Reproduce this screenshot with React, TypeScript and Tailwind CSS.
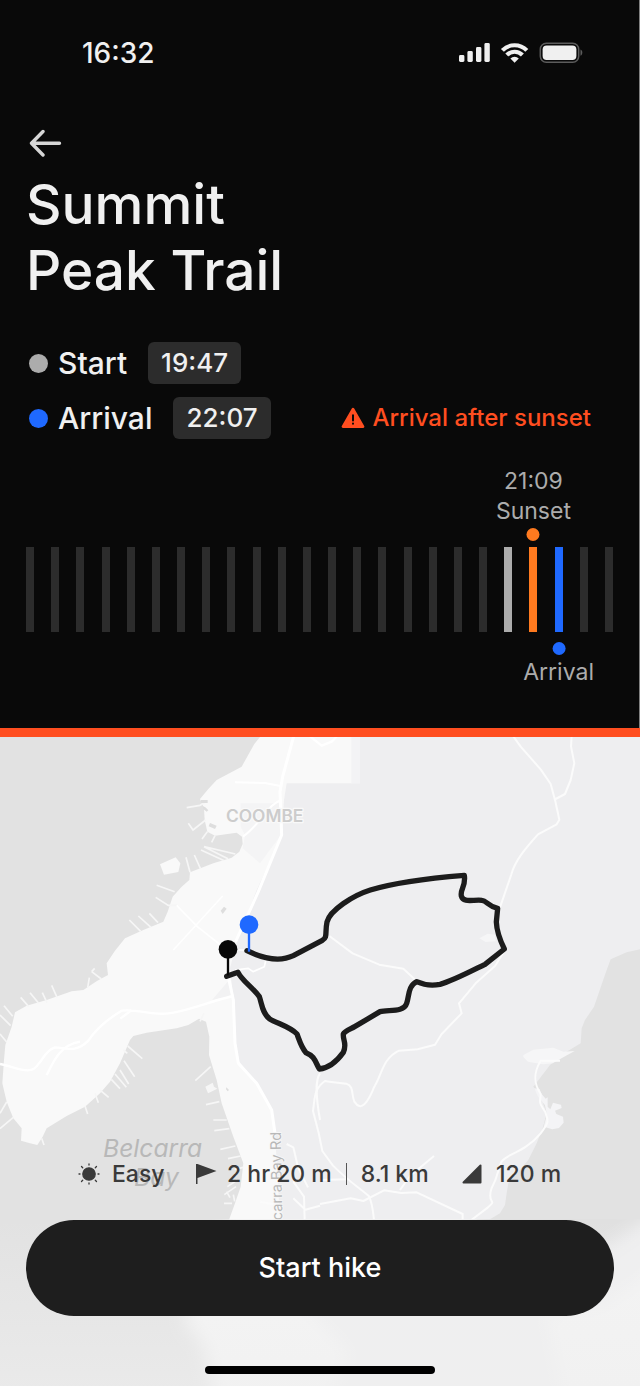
import React from "react";

const HOURS = Array.from({ length: 24 }, (_, hour) => hour);
const START_HOUR = 19;
const SUNSET_HOUR = 20;
const ARRIVAL_HOUR = 21;

function barColor(hour: number) {
  if (hour === START_HOUR) return "bg-[#acacac]";
  if (hour === SUNSET_HOUR) return "bg-[#ff7a1f]";
  if (hour === ARRIVAL_HOUR) return "bg-[#1f69ff]";
  return "bg-[#2c2c2c]";
}

function StatusIcons() {
  return (
    <svg viewBox="0 0 124 22" className="h-[22px] w-[124px]" fill="#f0f0f0" role="img" aria-label="Signal, Wi-Fi and battery">
      <rect x="0" y="13" width="5.4" height="7" rx="1.4" />
      <rect x="8.4" y="9" width="5.4" height="11" rx="1.4" />
      <rect x="17" y="5" width="5.4" height="15" rx="1.4" />
      <rect x="25.4" y="1" width="5.4" height="19" rx="1.4" />
      <g fill="none" stroke="#f0f0f0" strokeWidth="4.2">
        <path d="M43.4 8.4a17 17 0 0 1 24.4 0" />
        <path d="M47.8 13a11 11 0 0 1 15.6 0" />
      </g>
      <path d="M51.4 16.4a6 6 0 0 1 8.4 0l-4.2 4.4z" />
      <rect x="81.3" y="1.2" width="38.4" height="19" rx="6" fill="none" stroke="#5c5c5c" strokeWidth="1.5" />
      <rect x="83.6" y="3.5" width="33.8" height="14.4" rx="4" />
      <path d="M121.5 7.6c2.4.9 2.4 5.3 0 6.2z" fill="#5c5c5c" />
    </svg>
  );
}

function TrailMap() {
  return (
    <svg
      viewBox="0 51 1920 1950"
      preserveAspectRatio="xMidYMin slice"
      className="col-start-1 row-start-1 h-full w-full"
      role="img"
      aria-label="Trail map"
    >
      <defs>
        <filter id="soft" x="-5%" y="-5%" width="110%" height="110%">
          <feGaussianBlur stdDeviation="26" />
        </filter>
        <clipPath id="lower">
          <rect x="0" y="1498" width="1920" height="510" />
        </clipPath>
        <linearGradient id="fade" x1="0" y1="0" x2="0" y2="1">
          <stop offset="0" stopColor="#efefef" stopOpacity="0" />
          <stop offset="1" stopColor="#efefef" stopOpacity="0.6" />
        </linearGradient>
      </defs>

      <rect y="40" width="1920" height="1970" fill="#e2e2e2" />

      {/* Shoreline */}
      <path
        fill="#f9f9f9"
        d="M785 45L763 72L725 140L650 180L625 207L600 237L612 265L614 300L622 335L645 347L710 338L726 350L728 372L718 395L695 413L640 430L570 457L568 480L545 500L518 530L503 575L490 605L430 630L375 655L345 692L320 730L324 765L292 782L250 810L215 814L140 840L80 857L45 877L35 920L16 975L12 1020L7 1090L20 1145L40 1195L65 1225L63 1262L90 1270L112 1275L128 1250L140 1225L200 1188L255 1160L300 1120L330 1085L360 1030L390 960L400 948L440 938L530 925L565 915L597 896L618 905L628 950L627 1005L650 1080L665 1150L700 1250L730 1330L722 1400L705 1450L685 1505L1430 1505V45Z"
      />
      <path fill="#f9f9f9" d="M480 433L527 412L541 430L535 456L492 464Z" />
      <path fill="#f4f4f5" d="M722 250L845 250L843 345L780 430L728 385L735 345L722 320Z" />
      <path fill="#f2f2f3" d="M683 785L697 828L636 840Z" />

      {/* Park */}
      <path
        fill="#eeeef0"
        d="M860 190H1080V45H1920V688L1880 697L1832 718L1820 750L1782 860L1755 900L1745 925L1742 970L1700 995L1650 1035L1600 1100L1620 1125L1640 1180L1628 1225L1610 1270L1585 1320L1525 1390L1520 1420L1515 1455L1500 1480L1470 1498H840L825 1240L815 1170L770 1090L714 1020L705 980V850L697 810L690 745L712 660L770 510L845 350L852 240Z"
      />
      <path fill="#f3f3f5" d="M1054 51h26v139h-26z" />
      <path fill="#f6f6f7" d="M1438 655l25-14 22 3 2 20-30 2z M1570 1005l30-16 60-6 30 12 34-2-26 14-40 23-30 3-44-8-14-14z" />
      <path fill="#f4f4f6" d="M1603 1105l16 2 4 13 14 16 6-4v28l8 8 8-20 14 4 10 2 2 10-20 8 4 10 20 8 2 18-14 16-20 4-26-8 10-36-6-28-22-28z" />

      {/* Piers and inlets */}
      <g fill="none" stroke="#f6f6f6" strokeWidth="5">
        <path d="M560 263l40-7 20-12M565 310l14 20 38-30M622 335l-16 22M645 347l-10 20M558 412l12 45M583 405l18 40M603 390l70 32M612 380l72 36M612 380l94 22M470 496l54 19M467 532l38 24h26M448 580l26 28M415 588l38 34M388 600l34 34M275 755l9-10M275 755l29 22M268 773l-5 30M155 796l16 36M127 818l14 30M90 818l26 32M62 832l24 28M12 857l26 32M0 885l32 32M0 942l20 24" />
        <path d="M383 978l44 38M382 1000l-12-10M372 1022l32 48M360 1050l26 42M345 1062l34 40M334 1078l26 28M300 1110l26 22M285 1120l10 28M255 1158l8 24M0 1180l20-34M0 1226l40-34M125 1255l7 20M612 880l-12 24M632 1040l-46 42M658 1145l-40 9M680 1200h-40M688 1226l-45 6M706 1278l-45 10M722 1308l-38 8M730 1342l-26 6M712 1380l-30 20M708 1400l-35 24M680 1415l10 18M700 1424l4 20M672 1450h24" />
      </g>
      <path fill="#f6f6f6" d="M616 1100l22-12 4 12 10 6-20 10-8 4z" />
      <path fill="#dedede" d="M603 240h20v9h-20z M608 258l8 4 9 9-5 4-10-8z M630 309l20 8-5 10-19-8z M662 572l10-12 8 6-12 16z M679 1102l8 8-4 4-5-6z" />

      {/* Roads */}
      <g fill="none" stroke="#ffffff" strokeWidth="7" strokeLinejoin="round">
        <path d="M882 45l-34 125-8 45 5 130-70 170-68 150M685 770l15 70 5 130 10 60 55 60 45 80 10 70" strokeWidth="9" />
        <path d="M697 828c-90 24-150 50-200 53s-80-14-132-9c-50 30-80 60-100 90-40 40-70 20-100 20-30 10-35 36-50 50-20 36-60 12-115 0M240 965c-60 10-80 60-100 100M395 870l-34 26" />
        <path d="M705 187l90 2 50 10M845 240c-40 10-60 70-116 110" strokeWidth="6" />
        <path d="M520 690l148-162M530 556l62 64 66 52" strokeWidth="5" />
        <path d="M705 750l40-5 14 10 34-15 5-22M715 690h28" strokeWidth="5" />
        <path d="M925 45l40 32 30-12 20-20" />
      </g>
      <g fill="none" stroke="#fbfbfb" strokeWidth="6" strokeLinejoin="round">
        <path d="M1537 45l25 35 60 68 30 44 14 52 12 55-8 14-56 30c-36 40-70 80-80 120l-36 105M1715 45l-2 35 10 50-11 50-17 42-28 15" />
        <path d="M988 648l70 52 80 34 72 12 34 32M1515 690l-30 48-58 52-50 60 8 30-60 62-20 32-52 14-56 4c-50 24-50 70-74 108-20 50-40 76-60 45-10-24 0-45-24-54-24-4-44-4-64-8-34 24-30 50-36 90l18 70 10 50 32 44c50 50 84 70 108 92 12 26 12 50 15 70" />
        <path d="M960 1060c-14 20-14 60 0 140M960 1380l80-2M960 1452l92-17 38 8 62-32 52 8 46-2 138 65v28M1200 1410l30-42 72-60M1680 1022h-58c-24 40-20 70 0 100 0 24-10 20 14 54 8 30 14 26-14 64-50 60-102 60-118 86-10 20-8 40-30 80-14 50 20 30-10 56l-50 38" />
        <path d="M860 1272l20 10 14 60 30 60M880 1385l32 45 2 70M880 1435l36 34 44-12M780 1445l40 8" />
      </g>

      {/* Place names */}
      <g fontFamily="Inter, sans-serif" strokeLinejoin="round" paintOrder="stroke">
        <text x="678" y="305" fontSize="52" fontWeight="600" fill="#cccccc" stroke="#f9f9f9" strokeWidth="8">COOMBE</text>
        <g fill="#b8b8b8" fontSize="74" fontStyle="italic">
          <text x="309" y="1310">Belcarra</text>
          <text x="402" y="1397">Bay</text>
        </g>
        <text transform="translate(847 1501) rotate(-91)" fontSize="44" fill="#b8b8b8" stroke="#f7f7f7" strokeWidth="5">carra Bay Rd</text>
      </g>

      {/* Softened lower edge */}
      <g clipPath="url(#lower)">
        <g filter="url(#soft)">
          <rect x="-80" y="1420" width="2080" height="680" fill="#e2e2e2" />
          <path fill="#f5f5f5" d="M690 1480L550 1800L610 1880L660 2100H2000V1480Z" />
          <path fill="#efeff0" d="M820 1400L860 1700L1050 1900L960 2100H2000V1400Z" />
          <path fill="#e0e0e0" d="M1480 1400L1430 1510L1580 1640L1820 1580L2000 1460V1400Z" />
          <path fill="#f4f4f4" d="M1920 1680L1800 1760L1620 1780L1640 1800L1700 2100H2000V1600Z" />
        </g>
        <rect y="1498" width="1920" height="510" fill="url(#fade)" />
      </g>

      {/* Route */}
      <path
        fill="none"
        stroke="#1c1c1c"
        strokeWidth="16"
        strokeLinecap="round"
        strokeLinejoin="round"
        d="M680 769L714 757C726 782 758 802 778 830C786 852 786 878 808 896C830 910 870 920 891 942C900 966 904 982 918 998C944 1008 946 1026 958 1047C986 1044 1012 1022 1030 997C1042 970 1028 962 1030 942C1034 934 1050 928 1064 920L1140 875C1164 868 1212 878 1220 850C1228 826 1224 798 1250 785C1270 794 1294 798 1320 793C1360 782 1420 750 1455 733L1513 687C1500 660 1490 634 1489 606L1493 565C1466 560 1460 542 1446 541C1420 538 1390 550 1384 528C1380 506 1398 500 1393 466C1320 472 1196 484 1111 510C1060 526 990 570 981 606C974 640 984 650 967 661L880 707C840 726 790 716 741 692"
      />
      <path d="M747 613V695" stroke="#1f69ff" strokeWidth="7" />
      <circle cx="747" cy="614" r="28" fill="#1f69ff" />
      <path d="M684 690V766" stroke="#080808" strokeWidth="7" />
      <circle cx="684" cy="688" r="28" fill="#080808" />
    </svg>
  );
}

function SunIcon() {
  return (
    <svg viewBox="0 0 22 22" className="h-[22px] w-[22px]" fill="#3a3a3a" stroke="#3a3a3a" strokeWidth="1.3" strokeLinecap="round" aria-hidden="true">
      <circle cx="11" cy="11" r="6.2" />
      <path d="M11 1v1M11 20v1M1 11h1M20 11h1M3.5 3.5l1.2 1.2M17.3 17.3l1.2 1.2M3.5 18.5l1.2-1.2M17.3 4.7l1.2-1.2" />
    </svg>
  );
}

function TimeRow({ label, time, dot }: { label: string; time: string; dot: string }) {
  return (
    <div className="flex items-center">
      <span className={"mr-[10px] h-[19px] w-[19px] rounded-full " + dot} />
      <dt className="mr-[21px] text-[30px] leading-[42px] font-medium">{label}</dt>
      <dd className="rounded-md bg-[#2c2c2c] px-[13px] text-[26px] leading-[42px] font-medium">{time}</dd>
    </div>
  );
}

export default function App() {
  return (
    <main className="flex min-h-screen flex-col bg-[#090909] font-['Inter',sans-serif] text-[#f0f0f0]">
      <div className="border-r border-[#808080]">
        <div className="flex items-center justify-between pt-8 pr-14 pl-[82px]">
          <time className="text-[28px] leading-[42px] font-medium">16:32</time>
          <StatusIcons />
        </div>

        <header className="px-[26px] pt-[55px]">
          <button type="button" aria-label="Back" className="block h-[28px] w-[38px]">
            <svg viewBox="0 0 38 28" className="h-full w-full" fill="none" stroke="#d6d6d6" strokeWidth="3.4" strokeLinecap="round" strokeLinejoin="round">
              <path d="M33.5 14.3H6M17 2.5L5.5 14.3L17 26" />
            </svg>
          </button>
          <h1 className="mt-[14px] text-[55px] leading-[66px] font-medium">
            Summit
            <br />
            Peak Trail
          </h1>
        </header>

        <section className="mt-[39px] flex items-end justify-between pr-[48px] pl-[29px]">
          <dl className="flex flex-col gap-[13px]">
            <TimeRow label="Start" time="19:47" dot="bg-[#acacac]" />
            <TimeRow label="Arrival" time="22:07" dot="bg-[#1f69ff]" />
          </dl>
          <p className="flex items-center gap-[7px] text-[24px] leading-[42px] font-medium text-[#ff4e20]">
            <svg viewBox="0 0 24 22" className="h-[22px] w-6" aria-hidden="true">
              <path d="M12 2.2L22 19.6H2z" fill="#ff4e20" stroke="#ff4e20" strokeWidth="2.8" strokeLinejoin="round" />
              <path d="M12 8.3v5.2M12 16.4v.3" stroke="#090909" strokeWidth="2" strokeLinecap="round" />
            </svg>
            Arrival after sunset
          </p>
        </section>

        <section aria-label="Daylight timeline" className="mt-[108px] mb-[96px] flex h-[85px] justify-between px-[26px] text-[23px] leading-[30px] text-[#acacac]">
          {HOURS.map((hour) => (
            <div key={hour} className={"relative w-2 " + barColor(hour)}>
              {hour === SUNSET_HOUR && (
                <div className="absolute bottom-full left-1/2 flex -translate-x-1/2 flex-col items-center pb-[6px] text-center">
                  <span>21:09</span>
                  <span>Sunset</span>
                  <span className="mt-[2px] h-[13px] w-[13px] rounded-full bg-[#ff7a1f]" />
                </div>
              )}
              {hour === ARRIVAL_HOUR && (
                <div className="absolute top-full left-1/2 flex -translate-x-1/2 flex-col items-center pt-[10px]">
                  <span className="mb-[2px] h-[13px] w-[13px] rounded-full bg-[#1f69ff]" />
                  <span>Arrival</span>
                </div>
              )}
            </div>
          ))}
        </section>
      </div>

      <section className="grid flex-1 border-t-[9px] border-[#ff4e20] text-[#3a3a3a]">
        <div className="col-start-1 row-start-1 grid overflow-hidden [contain:size]">
          <TrailMap />
        </div>
        <div className="relative col-start-1 row-start-1 flex flex-col px-[26px] pt-[417px] pb-3">
          <ul className="flex items-center pl-[52px] text-[23px] leading-[40px] font-medium whitespace-nowrap">
            <li className="flex w-[117px] items-center gap-3">
              <SunIcon />
              Easy
            </li>
            <li className="flex w-[267px] items-center">
              <svg viewBox="0 0 22 22" className="mr-[10px] h-[22px] w-[22px]" fill="#3a3a3a" aria-hidden="true">
                <path d="M1 1h1.5l19 7-19 7v6H1z" />
              </svg>
              2 hr 20 m
              <span className="mx-[14px] h-[22px] w-px bg-[#555555]" />
              8.1 km
            </li>
            <li className="flex items-center gap-[14px]">
              <svg viewBox="0 0 20 20" className="h-5 w-5" aria-hidden="true">
                <path d="M18.5 1.5v17h-17z" fill="#3a3a3a" stroke="#3a3a3a" strokeWidth="2" strokeLinejoin="round" />
              </svg>
              120 m
            </li>
          </ul>
          <button type="button" className="mt-[26px] h-24 rounded-full bg-[#1e1e1e] text-[27px] font-medium text-white">
            Start hike
          </button>
          <span className="mt-[50px] h-2 w-[230px] self-center rounded-full bg-black" />
        </div>
      </section>
    </main>
  );
}
